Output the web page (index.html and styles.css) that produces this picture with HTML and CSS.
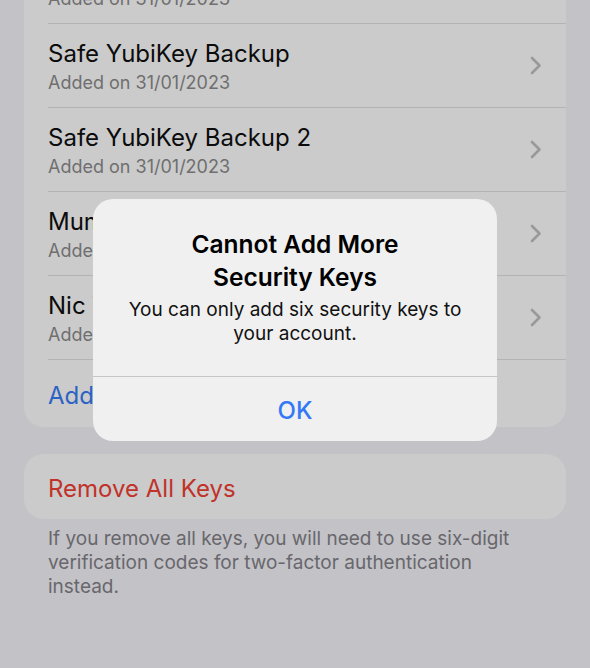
FILE: index.html
```html
<!DOCTYPE html>
<html lang="en">
<head>
    <meta charset="UTF-8">
    <meta name="viewport" content="width=device-width, initial-scale=1.0">
    <title>Security Keys</title>
    <link rel="stylesheet" href="styles.css">
</head>
<body>
    <div class="screen">
        <div class="group keys">
            <div class="row">
                <div class="row-text">
                    <div class="row-title">YubiKey 5C NFC</div>
                    <div class="row-sub">Added on 31/01/2023</div>
                </div>
                <svg class="chevron" width="12" height="19" viewBox="0 0 12 19"><path d="M2 2 L9.5 9.5 L2 17" fill="none" stroke="#999" stroke-width="2.6" stroke-linecap="round" stroke-linejoin="round"/></svg>
            </div>
            <div class="row">
                <div class="row-text">
                    <div class="row-title">Safe YubiKey Backup</div>
                    <div class="row-sub">Added on 31/01/2023</div>
                </div>
                <svg class="chevron" width="12" height="19" viewBox="0 0 12 19"><path d="M2 2 L9.5 9.5 L2 17" fill="none" stroke="#999" stroke-width="2.6" stroke-linecap="round" stroke-linejoin="round"/></svg>
            </div>
            <div class="row">
                <div class="row-text">
                    <div class="row-title">Safe YubiKey Backup 2</div>
                    <div class="row-sub">Added on 31/01/2023</div>
                </div>
                <svg class="chevron" width="12" height="19" viewBox="0 0 12 19"><path d="M2 2 L9.5 9.5 L2 17" fill="none" stroke="#999" stroke-width="2.6" stroke-linecap="round" stroke-linejoin="round"/></svg>
            </div>
            <div class="row">
                <div class="row-text">
                    <div class="row-title">Mum's YubiKey</div>
                    <div class="row-sub">Added on 31/01/2023</div>
                </div>
                <svg class="chevron" width="12" height="19" viewBox="0 0 12 19"><path d="M2 2 L9.5 9.5 L2 17" fill="none" stroke="#999" stroke-width="2.6" stroke-linecap="round" stroke-linejoin="round"/></svg>
            </div>
            <div class="row">
                <div class="row-text">
                    <div class="row-title">Nic YubiKey</div>
                    <div class="row-sub">Added on 31/01/2023</div>
                </div>
                <svg class="chevron" width="12" height="19" viewBox="0 0 12 19"><path d="M2 2 L9.5 9.5 L2 17" fill="none" stroke="#999" stroke-width="2.6" stroke-linecap="round" stroke-linejoin="round"/></svg>
            </div>
            <div class="row add-row">Add Security Key</div>
        </div>

        <div class="group remove">Remove All Keys</div>
        <p class="footnote">If you remove all keys, you will need to use six-digit verification codes for two-factor authentication instead.</p>
    </div>

    <!-- alert -->
    <div class="alert">
        <div class="alert-body">
            <div class="alert-title">Cannot Add More<br>Security Keys</div>
            <div class="alert-msg">You can only add six security keys to<br>your account.</div>
        </div>
        <div class="alert-btn">OK</div>
    </div>
</body>
</html>
```

FILE: styles.css
```css
body {
    margin: 0;
    background: #c3c2c7;
    font-family: Inter, "Noto Sans", sans-serif;
    overflow: hidden;
    height: 668px;
}
.screen {
    padding: 0 24px;
}
.group {
    background: #cbcbcb;
    border-radius: 20px;
}
.keys {
    margin-top: -60px;
}
.row {
    display: flex;
    align-items: center;
    justify-content: space-between;
    height: 84px;
    margin-left: 24px;
    padding-right: 24px;
    border-bottom: 1px solid #b4b4b4;
    box-sizing: border-box;
}
.row-text {
    padding-top: 3px;
}
.row-title {
    font-size: 24px;
    line-height: 28px;
    color: #0c0c0c;
}
.row-sub {
    margin-top: 3px;
    font-size: 18px;
    line-height: 24px;
    color: #6f6f6f;
}
.chevron {
    display: block;
}
.add-row {
    height: 67px;
    border-bottom: none;
    padding-top: 3px;
    color: #2b63c4;
    font-size: 24px;
}
.remove {
    margin-top: 27px;
    height: 65px;
    display: flex;
    align-items: center;
    padding-left: 24px;
    padding-top: 3px;
    box-sizing: border-box;
    color: #c0322a;
    font-size: 24px;
}
.footnote {
    margin: 8px 24px 0 24px;
    font-size: 19px;
    line-height: 24px;
    color: #68676c;
}
.alert {
    position: absolute;
    left: 93px;
    top: 199px;
    width: 404px;
    height: 242px;
    border-radius: 20px;
    background: #f0f0f0;
    text-align: center;
    display: flex;
    flex-direction: column;
    overflow: hidden;
}
.alert-body {
    height: 178px;
    box-sizing: border-box;
    padding-top: 29px;
    border-bottom: 1px solid #c6c6c6;
}
.alert-title {
    font-size: 24.5px;
    line-height: 33px;
    font-weight: 600;
    color: #000;
}
.alert-msg {
    margin-top: 4px;
    font-size: 19px;
    line-height: 24px;
    color: #111;
}
.alert-btn {
    flex: 1;
    display: flex;
    align-items: center;
    justify-content: center;
    padding-top: 2px;
    color: #3478f6;
    font-size: 24px;
    font-weight: 500;
}
```
